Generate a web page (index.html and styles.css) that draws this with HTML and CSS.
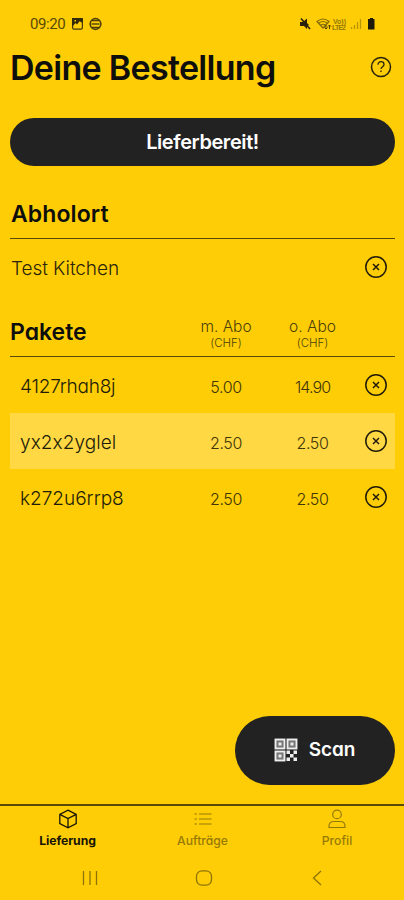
FILE: index.html
```html
<!DOCTYPE html>
<html lang="de">
<head>
<meta charset="utf-8">
<title>Deine Bestellung</title>
<link rel="stylesheet" href="styles.css">
</head>
<body>
<svg class="defs" width="0" height="0">
  <symbol id="remove" viewBox="0 0 24 24"><circle cx="12" cy="12" r="10.200" fill="none" stroke="currentColor" stroke-width="1.500"/><path d="M9 9l6 6M15 9l-6 6" fill="none" stroke="currentColor" stroke-width="1.500"/></symbol>
</svg>
<div class="screen">
  <header class="status">
    <span class="clock">09:20</span>
    <svg class="status-left" width="31" height="14" viewBox="0 0 31 14">
      <rect x="1.6" y="1.6" width="9.8" height="10.6" rx="1.4" fill="none" stroke="#463908" stroke-width="1.2"/><path d="M1 1h10.800v5L8.500 4.300 6 7.500 4.500 6 1 10z" fill="#332a08"/><path d="M3.500 3h1.500v1.500H3.500z" fill="#ffcd05"/>
      <circle cx="24.500" cy="7" r="5.400" fill="none" stroke="#4d3f08" stroke-width="1.500"/><path d="M20.500 7h8" stroke="#4d3f08" stroke-width="1.400"/><path d="M21 3.500h7M21 10.500h7" stroke="#4d3f08" stroke-width="1.300"/>
    </svg>
    <svg class="status-right" width="78" height="14" viewBox="0 0 78 14">
      <path d="M1 5h3l4-3.500V6l2 2-2 1v3L5 9H1z" fill="#2a2208"/><path d="M2 1.500l9 10.500" stroke="#2a2208" stroke-width="1.600"/>
      <g fill="none" stroke="#806a08" stroke-width="1.200"><path d="M18 4.500q6-5 12 0L24 11zM20 6q4-3 8 0M22 8q2-1.500 4 0"/></g>
      <path d="M27 8v4m-1.500-1.500L27 12l1.500-1.500M30.500 12V8M29 9.500L30.500 8 32 9.500" stroke="#4d3f08" fill="none"/>
      <text class="tiny" x="34" y="6.500" textLength="13">Vo))</text><text class="tiny" x="33" y="13" textLength="14">LTE2</text>
      <path d="M52.500 12V10M55.500 12V8M58.500 12V5M61.500 12V2" stroke="#b99508" stroke-width="1.300"/>
      <path d="M70 2h1V1h3v1h1.500v10.500H69V2z" fill="#1e1a0c"/>
    </svg>
  </header>
  <div class="title-row">
    <h1>Deine Bestellung</h1>
    <svg class="help" width="22" height="22" viewBox="0 0 22 22" fill="none" stroke="#29230b"><circle cx="11" cy="11" r="9.500" stroke-width="1.500"/><path d="M8 8.700C8 4.600 14 4.900 14 8.500c0 2.200-3 2.200-3 4.500M11 14.600v1.500" stroke-width="1.300"/></svg>
  </div>
  <button class="ready"><span>Lieferbereit!</span></button>
  <section class="pickup">
    <div class="section-head"><h2 class="h-pickup">Abholort</h2></div>
    <div class="place"><span>Test Kitchen</span><svg class="x"><use href="#remove"/></svg></div>
  </section>
  <section class="packages">
    <div class="section-head grid">
      <h2 class="h-packages">Pakete</h2>
      <div class="col"><b>m. Abo</b><small>(CHF)</small></div>
      <div class="col"><b>o. Abo</b><small>(CHF)</small></div>
    </div>
    <div class="grid item"><span class="name n1">4127rhah8j</span><span class="price">5.00</span><span class="price wide">14.90</span><svg class="x"><use href="#remove"/></svg></div>
    <div class="grid item marked"><span class="name n2">yx2x2yglel</span><span class="price">2.50</span><span class="price">2.50</span><svg class="x"><use href="#remove"/></svg></div>
    <div class="grid item"><span class="name n3">k272u6rrp8</span><span class="price">2.50</span><span class="price">2.50</span><svg class="x"><use href="#remove"/></svg></div>
  </section>
  <div class="action">
    <button class="scan">
      <svg width="24" height="24" viewBox="0 0 24 24"><g fill="#777" stroke="#eee" stroke-width="1.900"><rect x="1.500" y="1.500" width="9" height="9"/><rect x="13.500" y="1.500" width="9" height="9"/><rect x="1.500" y="13.500" width="9" height="9"/></g><path fill="#eee" d="M4.500 4.500h3v3h-3zM16.500 4.500h3v3h-3zM4.500 16.500h3v3h-3zM12.500 12.500h3.500v3.500h3.500v3.500H16V16h-3.500zM19.500 12.500h3.500V16h-3.500zM12.500 19.500H16V23h-3.500zM19.500 19.500h3.500V23h-3.500z"/></svg>
      <span>Scan</span>
    </button>
  </div>
  <nav class="tabs">
    <a class="tab active"><svg width="20" height="20" viewBox="0 0 20 20" fill="none" stroke="currentColor" stroke-width="1.300"><path d="M10 1.200l8.200 4.100v9.400L10 18.800l-8.200-4.100V5.300zM1.800 5.300L10 9.500l8.200-4.200M10 9.500v9"/></svg><span>Lieferung</span></a>
    <a class="tab"><svg width="20" height="20" viewBox="0 0 20 20" fill="none" stroke="currentColor" stroke-width="1.200"><path d="M1.500 5H4M1.500 10H4M1.500 15H4M6 5h12.500M6 10h12.500M6 15h12.500"/></svg><span>Aufträge</span></a>
    <a class="tab"><svg width="20" height="20" viewBox="0 0 20 20" fill="none" stroke="currentColor" stroke-width="1.200"><circle cx="10" cy="5.400" r="4.300"/><path d="M2 18.500v-1.200c0-2.800 2-4.800 5-4.800h6c3 0 5 2 5 4.800v1.200z"/></svg><span>Profil</span></a>
  </nav>
  <footer class="system">
    <svg width="18" height="18" viewBox="0 0 18 18"><path d="M2.500 2v14M9 2v14M15.500 2v14"/></svg>
    <svg width="18" height="18" viewBox="0 0 18 18"><rect x="1.500" y="1.800" width="15" height="14.400" rx="5.500"/></svg>
    <svg width="18" height="18" viewBox="0 0 18 18"><path d="M12 2L4.500 9l7.500 7"/></svg>
  </footer>
</div>
</body>
</html>
```
FILE: styles.css
```css
* { box-sizing: border-box; }
body { margin: 0; background: #ffcd05; color: #0e0f0d; font-family: Inter, "Liberation Sans", sans-serif; font-feature-settings: "cv11" 1, "ss03" 1, "calt" 0; }
h1, h2 { margin: 0; font-weight: 600; white-space: nowrap; }
button { border: 0; padding: 0; font: inherit; font-feature-settings: inherit; color: #fff; background: #222; display: flex; align-items: center; justify-content: center; }
svg { display: block; flex: none; }
.defs { position: absolute; }
.screen { width: 404px; height: 900px; display: flex; flex-direction: column; overflow: hidden; }
.status { height: 46px; padding: 2px 27px 0 30px; display: flex; align-items: center; }
.clock { width: 41px; font: 15px/18px Roboto, sans-serif; letter-spacing: -.4px; color: #594909; }
.status-right { margin-left: auto; }
.tiny { font: 700 7px "Liberation Sans", sans-serif; fill: #967a08; }
.title-row { height: 44px; padding: 0 12px 0 10px; display: flex; align-items: center; justify-content: space-between; }
.help { margin-bottom: 3px; }
h1 { font-size: 34px; line-height: 44px; letter-spacing: -.7px; }
.ready { flex: none; height: 48px; margin: 28px 9px 0 10px; border-radius: 24px; font-size: 20px; font-weight: 600; letter-spacing: -.42px; }
.pickup { margin: 24px 9px 0 10px; }
.section-head { height: 49px; border-bottom: 1px solid #5a4a0a; }
h2 { font-size: 23px; line-height: 48px; }
.h-pickup { padding-left: 1px; letter-spacing: .1px; }
.place { height: 56px; display: flex; align-items: center; justify-content: space-between; padding: 2px 7px 0 1px; font-size: 19px; font-weight: 300; letter-spacing: -.08px; color: #2b240a; }
.x { width: 24px; height: 24px; color: #211c0a; }
.place .x { margin-bottom: 2px; }
.packages { margin: 13px 9px 0 10px; }
.grid { display: grid; grid-template-columns: 173px 86px 87px 39px; align-items: center; }
.col { display: flex; flex-direction: column; align-items: center; color: #4b3e09; padding-top: 2px; }
.col b { font-size: 15.500px; font-weight: 350; line-height: 19px; }
.col small { font-size: 11.500px; font-weight: 350; line-height: 14px; }
.item { height: 56px; }
.marked { background: #ffd843; }
.name { padding: 2px 0 0 10px; font-size: 19px; font-weight: 300; color: #211c0a; }
.n1 { letter-spacing: -.2px; }
.n2 { letter-spacing: .08px; }
.price { text-align: center; font-size: 16px; font-weight: 300; letter-spacing: -.4px; padding-top: 4px; color: #40350a; }
.wide { letter-spacing: -.9px; }
.item .x { margin: 0 0 1px 8px; }
.action { margin-top: auto; height: 88px; padding-right: 9px; display: flex; justify-content: flex-end; }
.scan { width: 160px; height: 69px; border-radius: 34.500px; gap: 11px; font-size: 19px; font-weight: 600; letter-spacing: -.1px; padding: 0 1px 2px 0; }
.tabs { flex: none; height: 53px; border-top: 2px solid #5a4a0a; display: grid; grid-template-columns: 135px 135px 134px; }
.tab { display: flex; flex-direction: column; align-items: center; padding-top: 3px; font-size: 12.200px; line-height: 15px; gap: 4px; color: #967a08; font-weight: 500; }
.tab.active { color: #171407; font-weight: 700; letter-spacing: -.05px; }
.system { flex: none; height: 43px; padding: 0 77px 2px 81px; display: flex; justify-content: space-between; align-items: center; }
.system svg { fill: none; stroke: #8d7308; stroke-width: 1.300; }
```
